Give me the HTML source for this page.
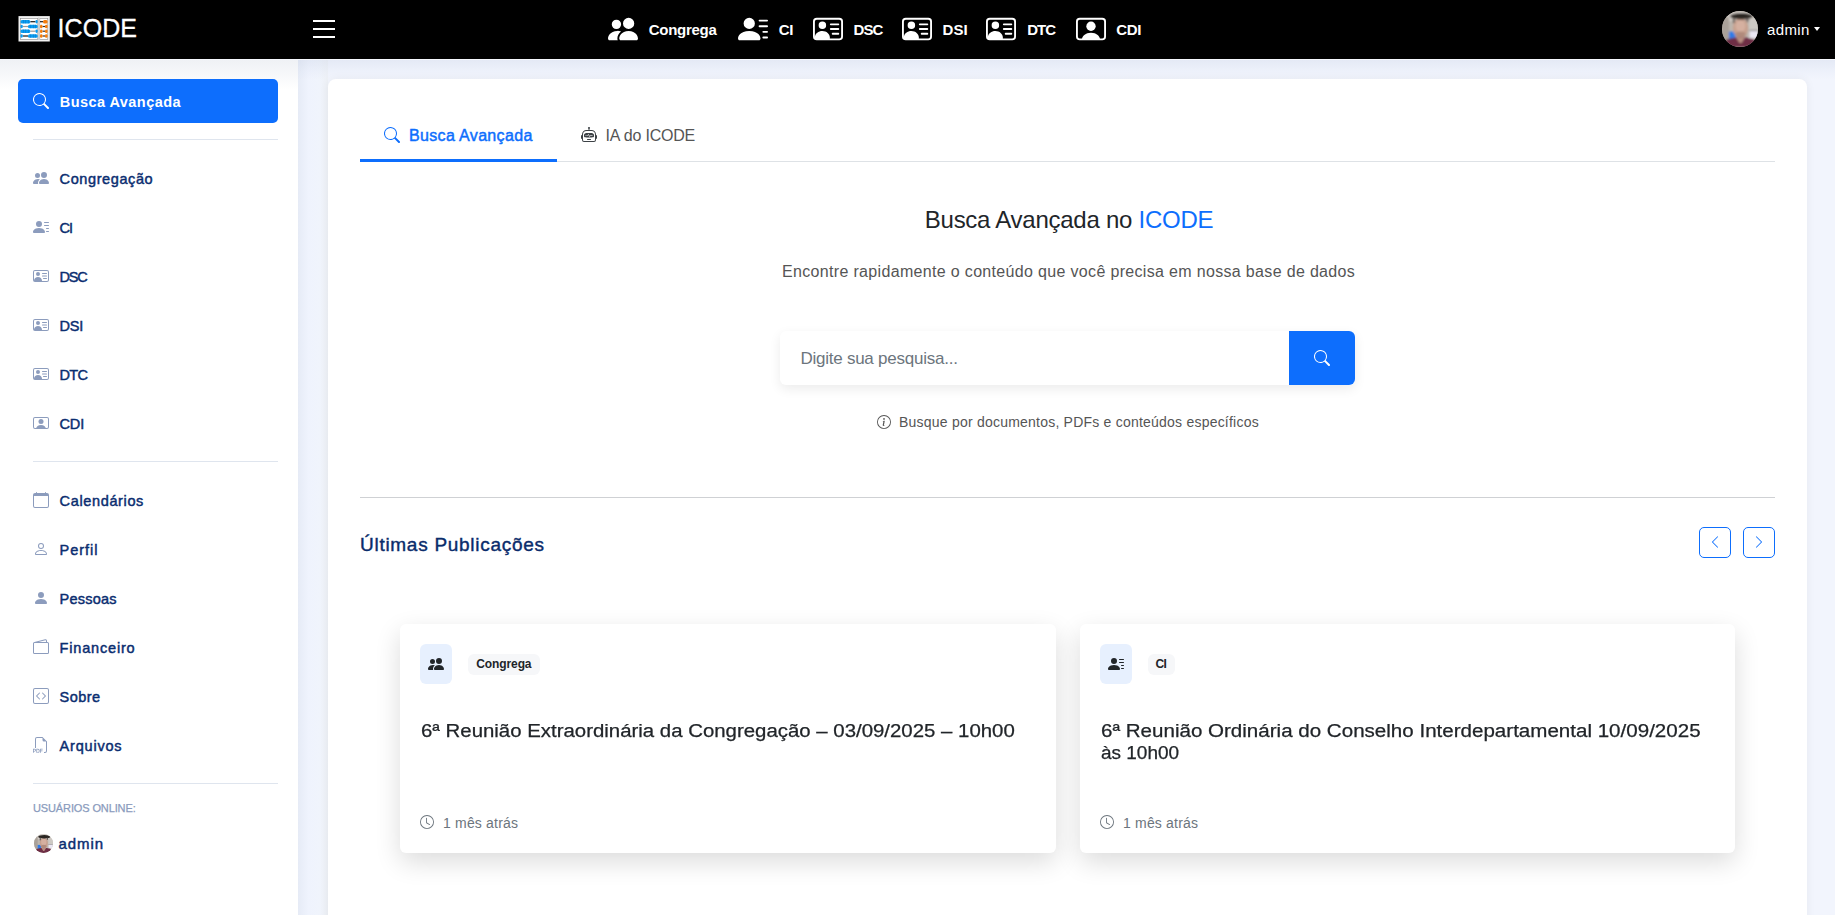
<!DOCTYPE html>
<html><head><meta charset="utf-8">
<style>
*{box-sizing:border-box;margin:0;padding:0}
html,body{width:1835px;height:915px;overflow:hidden}
body{font-family:"Liberation Sans",sans-serif;background:#f2f5fd;position:relative;color:#212529}
.abs{position:absolute}
svg{display:block}
#hdr{position:absolute;left:0;top:0;width:1835px;height:59px;background:#000;z-index:5}
#hline{position:absolute;left:0;top:59px;width:1835px;height:1px;background:#f6f8fe;z-index:5}
#side{position:absolute;left:0;top:60px;width:298px;height:855px;background:#fff}
#sidegrad{position:absolute;left:0;top:0;width:298px;height:30px;background:linear-gradient(#eff1f5,#fff)}
#bgshade{position:absolute;left:298px;top:60px;width:30px;height:855px;background:linear-gradient(90deg,#e6ebf6,#eff3fd 35%,#f0f4fc 70%,#eef1f6)}
#topshade{position:absolute;left:298px;top:60px;width:1537px;height:20px;background:linear-gradient(rgba(190,200,222,.26),rgba(200,210,232,.1) 60%,rgba(210,220,240,0))}
#card{position:absolute;left:328px;top:79px;width:1479px;height:900px;background:#fff;border-radius:8px;box-shadow:0 0 10px rgba(0,0,0,.06)}
.divl{position:absolute;left:33px;width:245px;height:1px;background:#dfe5ee}
.t{position:absolute;white-space:nowrap;line-height:1}
.avatar{border-radius:50%;background:radial-gradient(ellipse 30% 28% at 50% 48%,#c9a08a 0%,#b88a74 60%,transparent 100%),linear-gradient(180deg,#2a2420 0%,#3a302a 25%,#8d8680 45%,#7b6d66 65%,#6e2f3f 80%,#6a2a3a 100%)}
</style></head><body>
<div id="hdr">
<svg class="abs" style="left:16px;top:14px" width="36" height="30" viewBox="0 0 36 30">
<rect x="2.5" y="2.1" width="31.3" height="25.4" fill="#f2f2f2"/>
<rect x="4.3" y="4.3" width="17.5" height="21.1" fill="#fff" stroke="#8a8a8a" stroke-width="0.6"/>
<rect x="23.8" y="4.3" width="8" height="21.1" fill="#fff" stroke="#8a8a8a" stroke-width="0.6"/>
<rect x="21.9" y="3.5" width="1.8" height="22.5" fill="#d0d0d0"/>
<rect x="14.3" y="7.1000000000000005" width="5.2" height="1.2" fill="#1a1a1a"/>
<rect x="4.5" y="6.0" width="9.8" height="3.4" rx="1.5" fill="#0a9cf0"/>
<rect x="19.5" y="6.0" width="2.2" height="3.4" rx="1.1" fill="#0a9cf0"/>
<rect x="7.0" y="6.0" width="0.4" height="3.4" fill="#0670c0"/>
<rect x="9.5" y="6.0" width="0.4" height="3.4" fill="#0670c0"/>
<rect x="12.0" y="6.0" width="0.4" height="3.4" fill="#0670c0"/>
<rect x="24" y="7.1000000000000005" width="3" height="1.2" fill="#1a1a1a"/>
<rect x="27" y="6.0" width="4.6" height="3.4" rx="1.5" fill="#f57c0a"/>
<rect x="6.8" y="11.9" width="5.2" height="1.2" fill="#9a9a9a"/>
<rect x="4.5" y="10.8" width="2.3" height="3.4" rx="1.1" fill="#0a9cf0"/>
<rect x="12" y="10.8" width="9.7" height="3.4" rx="1.5" fill="#0a9cf0"/>
<rect x="14.5" y="10.8" width="0.4" height="3.4" fill="#0670c0"/>
<rect x="17.0" y="10.8" width="0.4" height="3.4" fill="#0670c0"/>
<rect x="19.4" y="10.8" width="0.4" height="3.4" fill="#0670c0"/>
<rect x="26.5" y="11.9" width="2.5" height="1.2" fill="#333"/>
<rect x="24" y="10.8" width="2.5" height="3.4" rx="1.2" fill="#f57c0a"/>
<rect x="29" y="10.8" width="2.6" height="3.4" rx="1.2" fill="#f57c0a"/>
<rect x="14.3" y="16.599999999999998" width="5.2" height="1.2" fill="#9a9a9a"/>
<rect x="4.5" y="15.5" width="9.8" height="3.4" rx="1.5" fill="#0a9cf0"/>
<rect x="19.5" y="15.5" width="2.2" height="3.4" rx="1.1" fill="#0a9cf0"/>
<rect x="7.0" y="15.5" width="0.4" height="3.4" fill="#0670c0"/>
<rect x="9.5" y="15.5" width="0.4" height="3.4" fill="#0670c0"/>
<rect x="12.0" y="15.5" width="0.4" height="3.4" fill="#0670c0"/>
<rect x="26.5" y="16.599999999999998" width="2.5" height="1.2" fill="#333"/>
<rect x="24" y="15.5" width="2.5" height="3.4" rx="1.2" fill="#f57c0a"/>
<rect x="29" y="15.5" width="2.6" height="3.4" rx="1.2" fill="#f57c0a"/>
<rect x="6.8" y="21.4" width="5.2" height="1.2" fill="#1a1a1a"/>
<rect x="4.5" y="20.3" width="2.3" height="3.4" rx="1.1" fill="#0a9cf0"/>
<rect x="12" y="20.3" width="9.7" height="3.4" rx="1.5" fill="#0a9cf0"/>
<rect x="14.5" y="20.3" width="0.4" height="3.4" fill="#0670c0"/>
<rect x="17.0" y="20.3" width="0.4" height="3.4" fill="#0670c0"/>
<rect x="19.4" y="20.3" width="0.4" height="3.4" fill="#0670c0"/>
<rect x="26.5" y="21.4" width="2.5" height="1.2" fill="#333"/>
<rect x="24" y="20.3" width="2.5" height="3.4" rx="1.2" fill="#f57c0a"/>
<rect x="29" y="20.3" width="2.6" height="3.4" rx="1.2" fill="#f57c0a"/>
</svg>
<div class="t" style="left:57.5px;top:15.64px;font-size:25px;color:#fff;font-weight:400;letter-spacing:0.07px;-webkit-text-stroke:0.3px #fff">ICODE</div>
<div class="abs" style="left:313px;top:20px;width:22px;height:2px;background:#fff"></div>
<div class="abs" style="left:313px;top:28px;width:22px;height:2px;background:#fff"></div>
<div class="abs" style="left:313px;top:36px;width:22px;height:2px;background:#fff"></div>
<svg class="abs" style="left:608px;top:14px;" width="30" height="30" viewBox="0 0 16 16" fill="#fff"><path d="M7 14s-1 0-1-1 1-4 5-4 5 3 5 4-1 1-1 1zm4-6a3 3 0 1 0 0-6 3 3 0 0 0 0 6m-5.784 6A2.24 2.24 0 0 1 5 13c0-1.355.68-2.75 1.936-3.72A6.3 6.3 0 0 0 5 9c-4 0-5 3-5 4s1 1 1 1zM4.5 8a2.5 2.5 0 1 0 0-5 2.5 2.5 0 0 0 0 5"/></svg>
<div class="t" style="left:648.8px;top:22.3px;font-size:15px;color:#fff;font-weight:700;letter-spacing:-0.29px;">Congrega</div>
<svg class="abs" style="left:738px;top:14px;" width="30" height="30" viewBox="0 0 16 16" fill="#fff"><path d="M6 8a3 3 0 1 0 0-6 3 3 0 0 0 0 6m-5 6s-1 0-1-1 1-4 6-4 6 3 6 4-1 1-1 1zM11 3.5a.5.5 0 0 1 .5-.5h4a.5.5 0 0 1 0 1h-4a.5.5 0 0 1-.5-.5m.5 2.5a.5.5 0 0 0 0 1h4a.5.5 0 0 0 0-1zm2 3a.5.5 0 0 0 0 1h2a.5.5 0 0 0 0-1zm0 3a.5.5 0 0 0 0 1h2a.5.5 0 0 0 0-1z"/></svg>
<div class="t" style="left:778.8px;top:22.3px;font-size:15px;color:#fff;font-weight:700;letter-spacing:-0.5px;">CI</div>
<svg class="abs" style="left:813px;top:14px;" width="30" height="30" viewBox="0 0 16 16" fill="#fff"><path d="M5 8a2 2 0 1 0 0-4 2 2 0 0 0 0 4m4-2.5a.5.5 0 0 1 .5-.5h4a.5.5 0 0 1 0 1h-4a.5.5 0 0 1-.5-.5M9 8a.5.5 0 0 1 .5-.5h4a.5.5 0 0 1 0 1h-4A.5.5 0 0 1 9 8m1 2.5a.5.5 0 0 1 .5-.5h3a.5.5 0 0 1 0 1h-3a.5.5 0 0 1-.5-.5"/><path d="M2 2a2 2 0 0 0-2 2v8a2 2 0 0 0 2 2h12a2 2 0 0 0 2-2V4a2 2 0 0 0-2-2zM1 4a1 1 0 0 1 1-1h12a1 1 0 0 1 1 1v8a1 1 0 0 1-1 1H8.96q.04-.245.04-.5C9 10.567 7.21 9 5 9c-2.086 0-3.8 1.398-3.984 3.181A1 1 0 0 1 1 12z"/></svg>
<div class="t" style="left:853.6px;top:22.3px;font-size:15px;color:#fff;font-weight:700;letter-spacing:-1px;">DSC</div>
<svg class="abs" style="left:902px;top:14px;" width="30" height="30" viewBox="0 0 16 16" fill="#fff"><path d="M5 8a2 2 0 1 0 0-4 2 2 0 0 0 0 4m4-2.5a.5.5 0 0 1 .5-.5h4a.5.5 0 0 1 0 1h-4a.5.5 0 0 1-.5-.5M9 8a.5.5 0 0 1 .5-.5h4a.5.5 0 0 1 0 1h-4A.5.5 0 0 1 9 8m1 2.5a.5.5 0 0 1 .5-.5h3a.5.5 0 0 1 0 1h-3a.5.5 0 0 1-.5-.5"/><path d="M2 2a2 2 0 0 0-2 2v8a2 2 0 0 0 2 2h12a2 2 0 0 0 2-2V4a2 2 0 0 0-2-2zM1 4a1 1 0 0 1 1-1h12a1 1 0 0 1 1 1v8a1 1 0 0 1-1 1H8.96q.04-.245.04-.5C9 10.567 7.21 9 5 9c-2.086 0-3.8 1.398-3.984 3.181A1 1 0 0 1 1 12z"/></svg>
<div class="t" style="left:942.6px;top:22.3px;font-size:15px;color:#fff;font-weight:700;letter-spacing:0.05px;">DSI</div>
<svg class="abs" style="left:986px;top:14px;" width="30" height="30" viewBox="0 0 16 16" fill="#fff"><path d="M5 8a2 2 0 1 0 0-4 2 2 0 0 0 0 4m4-2.5a.5.5 0 0 1 .5-.5h4a.5.5 0 0 1 0 1h-4a.5.5 0 0 1-.5-.5M9 8a.5.5 0 0 1 .5-.5h4a.5.5 0 0 1 0 1h-4A.5.5 0 0 1 9 8m1 2.5a.5.5 0 0 1 .5-.5h3a.5.5 0 0 1 0 1h-3a.5.5 0 0 1-.5-.5"/><path d="M2 2a2 2 0 0 0-2 2v8a2 2 0 0 0 2 2h12a2 2 0 0 0 2-2V4a2 2 0 0 0-2-2zM1 4a1 1 0 0 1 1-1h12a1 1 0 0 1 1 1v8a1 1 0 0 1-1 1H8.96q.04-.245.04-.5C9 10.567 7.21 9 5 9c-2.086 0-3.8 1.398-3.984 3.181A1 1 0 0 1 1 12z"/></svg>
<div class="t" style="left:1027.2px;top:22.3px;font-size:15px;color:#fff;font-weight:700;letter-spacing:-1px;">DTC</div>
<svg class="abs" style="left:1076px;top:14px;" width="30" height="30" viewBox="0 0 16 16" fill="#fff"><path d="M8 9.05a2.5 2.5 0 1 0 0-5 2.5 2.5 0 0 0 0 5"/><path d="M2 2a2 2 0 0 0-2 2v8a2 2 0 0 0 2 2h12a2 2 0 0 0 2-2V4a2 2 0 0 0-2-2zm10.798 11c-.453-1.27-1.76-3-4.798-3-3.037 0-4.345 1.73-4.798 3H2a1 1 0 0 1-1-1V4a1 1 0 0 1 1-1h12a1 1 0 0 1 1 1v8a1 1 0 0 1-1 1z"/></svg>
<div class="t" style="left:1116.2px;top:22.3px;font-size:15px;color:#fff;font-weight:700;letter-spacing:-0.3px;">CDI</div>
<svg class="abs" style="left:1722px;top:11px" width="36" height="36" viewBox="0 0 36 36">
<defs><clipPath id="cp1722"><circle cx="18" cy="18" r="18"/></clipPath><filter id="bl1722" x="-20%" y="-20%" width="140%" height="140%"><feGaussianBlur stdDeviation="1.05"/></filter></defs>
<g clip-path="url(#cp1722)"><rect width="36" height="36" fill="#bdb6ae"/>
<g filter="url(#bl1722)">
<rect x="0" y="0" width="36" height="10" fill="#d3cec8"/>
<rect x="0" y="6" width="7" height="30" fill="#a9a199"/>
<rect x="27" y="8" width="10" height="12" fill="#cdc9c4"/>
<rect x="7" y="20.6" width="6.5" height="7.5" fill="#2f7be8"/>
<rect x="27.5" y="19.3" width="9" height="0.9" fill="#3a3a3a"/>
<rect x="27.5" y="20" width="9" height="7.2" fill="#ebe7f4"/>
<ellipse cx="18.5" cy="17" rx="7.6" ry="10" fill="#c7a08e"/>
<ellipse cx="18.5" cy="15" rx="5" ry="6" fill="#d5b0a0"/>
<ellipse cx="18.5" cy="23.5" rx="5.5" ry="3" fill="#b08a7c"/>
<ellipse cx="19.5" cy="5.2" rx="11.5" ry="3.2" fill="#2a2523"/>
<rect x="10.8" y="6" width="2.2" height="6" fill="#4a403b" opacity=".8"/>
<rect x="24.3" y="6" width="2.2" height="5" fill="#4a403b" opacity=".8"/>
<path d="M0 36 L0 31 Q6 27.5 13 26.6 L24 26.6 Q31 27.5 36 31 L36 36 Z" fill="#6e2e45"/>
<path d="M14 26.6 L23 26.6 L19.5 32 L17.5 32 Z" fill="#b98f82"/>
</g></g></svg>
<div class="t" style="left:1767px;top:21.9px;font-size:15px;color:#fff;font-weight:400;letter-spacing:0.37px;">admin</div>
<div class="abs" style="left:1813.5px;top:27px;width:0;height:0;border-left:3.5px solid transparent;border-right:3.5px solid transparent;border-top:4px solid #fff"></div>
</div><div id="hline"></div>
<div id="side"><div id="sidegrad"></div></div>
<div class="abs" style="left:18px;top:79px;width:260px;height:44px;background:#0d6efd;border-radius:5px"></div>
<svg class="abs" style="left:33px;top:93px;" width="16" height="16" viewBox="0 0 16 16" fill="#fff"><path d="M11.742 10.344a6.5 6.5 0 1 0-1.397 1.398h-.001q.044.06.098.115l3.85 3.85a1 1 0 0 0 1.415-1.414l-3.85-3.85a1 1 0 0 0-.115-.1zM12 6.5a5.5 5.5 0 1 1-11 0 5.5 5.5 0 0 1 11 0"/></svg>
<div class="t" style="left:59.8px;top:94.73px;font-size:14.5px;color:#fff;font-weight:700;letter-spacing:0.44px;">Busca Avançada</div>
<div class="divl" style="top:139px"></div>
<svg class="abs" style="left:33px;top:170px;" width="16" height="16" viewBox="0 0 16 16" fill="#8c9cbd"><path d="M7 14s-1 0-1-1 1-4 5-4 5 3 5 4-1 1-1 1zm4-6a3 3 0 1 0 0-6 3 3 0 0 0 0 6m-5.784 6A2.24 2.24 0 0 1 5 13c0-1.355.68-2.75 1.936-3.72A6.3 6.3 0 0 0 5 9c-4 0-5 3-5 4s1 1 1 1zM4.5 8a2.5 2.5 0 1 0 0-5 2.5 2.5 0 0 0 0 5"/></svg>
<div class="t" style="left:59.6px;top:171.53px;font-size:14.5px;color:#0a2d70;font-weight:400;letter-spacing:0.6px;-webkit-text-stroke:0.45px #0a2d70">Congregação</div>
<svg class="abs" style="left:33px;top:219px;" width="16" height="16" viewBox="0 0 16 16" fill="#8c9cbd"><path d="M6 8a3 3 0 1 0 0-6 3 3 0 0 0 0 6m-5 6s-1 0-1-1 1-4 6-4 6 3 6 4-1 1-1 1zM11 3.5a.5.5 0 0 1 .5-.5h4a.5.5 0 0 1 0 1h-4a.5.5 0 0 1-.5-.5m.5 2.5a.5.5 0 0 0 0 1h4a.5.5 0 0 0 0-1zm2 3a.5.5 0 0 0 0 1h2a.5.5 0 0 0 0-1zm0 3a.5.5 0 0 0 0 1h2a.5.5 0 0 0 0-1z"/></svg>
<div class="t" style="left:59.6px;top:220.53px;font-size:14.5px;color:#0a2d70;font-weight:400;letter-spacing:-1.0px;-webkit-text-stroke:0.45px #0a2d70">CI</div>
<svg class="abs" style="left:33px;top:268px;" width="16" height="16" viewBox="0 0 16 16" fill="#8c9cbd"><path d="M5 8a2 2 0 1 0 0-4 2 2 0 0 0 0 4m4-2.5a.5.5 0 0 1 .5-.5h4a.5.5 0 0 1 0 1h-4a.5.5 0 0 1-.5-.5M9 8a.5.5 0 0 1 .5-.5h4a.5.5 0 0 1 0 1h-4A.5.5 0 0 1 9 8m1 2.5a.5.5 0 0 1 .5-.5h3a.5.5 0 0 1 0 1h-3a.5.5 0 0 1-.5-.5"/><path d="M2 2a2 2 0 0 0-2 2v8a2 2 0 0 0 2 2h12a2 2 0 0 0 2-2V4a2 2 0 0 0-2-2zM1 4a1 1 0 0 1 1-1h12a1 1 0 0 1 1 1v8a1 1 0 0 1-1 1H8.96q.04-.245.04-.5C9 10.567 7.21 9 5 9c-2.086 0-3.8 1.398-3.984 3.181A1 1 0 0 1 1 12z"/></svg>
<div class="t" style="left:59.6px;top:269.53px;font-size:14.5px;color:#0a2d70;font-weight:400;letter-spacing:-1.2px;-webkit-text-stroke:0.45px #0a2d70">DSC</div>
<svg class="abs" style="left:33px;top:317px;" width="16" height="16" viewBox="0 0 16 16" fill="#8c9cbd"><path d="M5 8a2 2 0 1 0 0-4 2 2 0 0 0 0 4m4-2.5a.5.5 0 0 1 .5-.5h4a.5.5 0 0 1 0 1h-4a.5.5 0 0 1-.5-.5M9 8a.5.5 0 0 1 .5-.5h4a.5.5 0 0 1 0 1h-4A.5.5 0 0 1 9 8m1 2.5a.5.5 0 0 1 .5-.5h3a.5.5 0 0 1 0 1h-3a.5.5 0 0 1-.5-.5"/><path d="M2 2a2 2 0 0 0-2 2v8a2 2 0 0 0 2 2h12a2 2 0 0 0 2-2V4a2 2 0 0 0-2-2zM1 4a1 1 0 0 1 1-1h12a1 1 0 0 1 1 1v8a1 1 0 0 1-1 1H8.96q.04-.245.04-.5C9 10.567 7.21 9 5 9c-2.086 0-3.8 1.398-3.984 3.181A1 1 0 0 1 1 12z"/></svg>
<div class="t" style="left:59.6px;top:318.53px;font-size:14.5px;color:#0a2d70;font-weight:400;letter-spacing:-0.2px;-webkit-text-stroke:0.45px #0a2d70">DSI</div>
<svg class="abs" style="left:33px;top:366px;" width="16" height="16" viewBox="0 0 16 16" fill="#8c9cbd"><path d="M5 8a2 2 0 1 0 0-4 2 2 0 0 0 0 4m4-2.5a.5.5 0 0 1 .5-.5h4a.5.5 0 0 1 0 1h-4a.5.5 0 0 1-.5-.5M9 8a.5.5 0 0 1 .5-.5h4a.5.5 0 0 1 0 1h-4A.5.5 0 0 1 9 8m1 2.5a.5.5 0 0 1 .5-.5h3a.5.5 0 0 1 0 1h-3a.5.5 0 0 1-.5-.5"/><path d="M2 2a2 2 0 0 0-2 2v8a2 2 0 0 0 2 2h12a2 2 0 0 0 2-2V4a2 2 0 0 0-2-2zM1 4a1 1 0 0 1 1-1h12a1 1 0 0 1 1 1v8a1 1 0 0 1-1 1H8.96q.04-.245.04-.5C9 10.567 7.21 9 5 9c-2.086 0-3.8 1.398-3.984 3.181A1 1 0 0 1 1 12z"/></svg>
<div class="t" style="left:59.6px;top:367.53px;font-size:14.5px;color:#0a2d70;font-weight:400;letter-spacing:-0.7px;-webkit-text-stroke:0.45px #0a2d70">DTC</div>
<svg class="abs" style="left:33px;top:415px;" width="16" height="16" viewBox="0 0 16 16" fill="#8c9cbd"><path d="M8 9.05a2.5 2.5 0 1 0 0-5 2.5 2.5 0 0 0 0 5"/><path d="M2 2a2 2 0 0 0-2 2v8a2 2 0 0 0 2 2h12a2 2 0 0 0 2-2V4a2 2 0 0 0-2-2zm10.798 11c-.453-1.27-1.76-3-4.798-3-3.037 0-4.345 1.73-4.798 3H2a1 1 0 0 1-1-1V4a1 1 0 0 1 1-1h12a1 1 0 0 1 1 1v8a1 1 0 0 1-1 1z"/></svg>
<div class="t" style="left:59.6px;top:416.53px;font-size:14.5px;color:#0a2d70;font-weight:400;letter-spacing:-0.2px;-webkit-text-stroke:0.45px #0a2d70">CDI</div>
<div class="divl" style="top:461px"></div>
<svg class="abs" style="left:33px;top:492px;" width="16" height="16" viewBox="0 0 16 16" fill="#8c9cbd"><path d="M3.5 0a.5.5 0 0 1 .5.5V1h8V.5a.5.5 0 0 1 1 0V1h1a2 2 0 0 1 2 2v11a2 2 0 0 1-2 2H2a2 2 0 0 1-2-2V3a2 2 0 0 1 2-2h1V.5a.5.5 0 0 1 .5-.5M1 4v10a1 1 0 0 0 1 1h12a1 1 0 0 0 1-1V4z"/></svg>
<div class="t" style="left:59.6px;top:493.73px;font-size:14.5px;color:#0a2d70;font-weight:400;letter-spacing:0.64px;-webkit-text-stroke:0.45px #0a2d70">Calendários</div>
<svg class="abs" style="left:33px;top:541px;" width="16" height="16" viewBox="0 0 16 16" fill="#8c9cbd"><path d="M8 8a3 3 0 1 0 0-6 3 3 0 0 0 0 6m2-3a2 2 0 1 1-4 0 2 2 0 0 1 4 0m4 8c0 1-1 1-1 1H3s-1 0-1-1 1-4 6-4 6 3 6 4m-1-.004c-.001-.246-.154-.986-.832-1.664C11.516 10.68 10.289 10 8 10s-3.516.68-4.168 1.332c-.678.678-.83 1.418-.832 1.664z"/></svg>
<div class="t" style="left:59.6px;top:542.73px;font-size:14.5px;color:#0a2d70;font-weight:400;letter-spacing:0.98px;-webkit-text-stroke:0.45px #0a2d70">Perfil</div>
<svg class="abs" style="left:33px;top:590px;" width="16" height="16" viewBox="0 0 16 16" fill="#8c9cbd"><path d="M3 14s-1 0-1-1 1-4 6-4 6 3 6 4-1 1-1 1zm5-6a3 3 0 1 0 0-6 3 3 0 0 0 0 6"/></svg>
<div class="t" style="left:59.6px;top:591.73px;font-size:14.5px;color:#0a2d70;font-weight:400;letter-spacing:0.23px;-webkit-text-stroke:0.45px #0a2d70">Pessoas</div>
<svg class="abs" style="left:33px;top:639px;" width="16" height="16" viewBox="0 0 16 16" fill="#8c9cbd"><path d="M12.136.326A1.5 1.5 0 0 1 14 1.78V3h.5A1.5 1.5 0 0 1 16 4.5v9a1.5 1.5 0 0 1-1.5 1.5h-13A1.5 1.5 0 0 1 0 13.5v-9a1.5 1.5 0 0 1 1.432-1.499zM5.562 3H13V1.78a.5.5 0 0 0-.621-.484zM1.5 4a.5.5 0 0 0-.5.5v9a.5.5 0 0 0 .5.5h13a.5.5 0 0 0 .5-.5v-9a.5.5 0 0 0-.5-.5z"/></svg>
<div class="t" style="left:59.6px;top:640.73px;font-size:14.5px;color:#0a2d70;font-weight:400;letter-spacing:0.82px;-webkit-text-stroke:0.45px #0a2d70">Financeiro</div>
<svg class="abs" style="left:33px;top:688px;" width="16" height="16" viewBox="0 0 16 16" fill="#8c9cbd"><path d="M14 1a1 1 0 0 1 1 1v12a1 1 0 0 1-1 1H2a1 1 0 0 1-1-1V2a1 1 0 0 1 1-1zM2 0a2 2 0 0 0-2 2v12a2 2 0 0 0 2 2h12a2 2 0 0 0 2-2V2a2 2 0 0 0-2-2z"/><path d="M6.854 4.646a.5.5 0 0 1 0 .708L4.207 8l2.647 2.646a.5.5 0 0 1-.708.708l-3-3a.5.5 0 0 1 0-.708l3-3a.5.5 0 0 1 .708 0m2.292 0a.5.5 0 0 0 0 .708L11.793 8l-2.647 2.646a.5.5 0 0 0 .708.708l3-3a.5.5 0 0 0 0-.708l-3-3a.5.5 0 0 0-.708 0"/></svg>
<div class="t" style="left:59.6px;top:689.73px;font-size:14.5px;color:#0a2d70;font-weight:400;letter-spacing:0.45px;-webkit-text-stroke:0.45px #0a2d70">Sobre</div>
<svg class="abs" style="left:33px;top:737px;" width="16" height="16" viewBox="0 0 16 16" fill="#8c9cbd"><path fill-rule="evenodd" d="M14 4.5V14a2 2 0 0 1-2 2h-1v-1h1a1 1 0 0 0 1-1V4.5h-2A1.5 1.5 0 0 1 9.5 3V1H4a1 1 0 0 0-1 1v9H2V2a2 2 0 0 1 2-2h5.5zM1.6 11.85H0v3.999h.791v-1.342h.803q.43 0 .732-.173.305-.175.463-.474a1.4 1.4 0 0 0 .161-.677q0-.375-.158-.677a1.2 1.2 0 0 0-.46-.477q-.3-.18-.732-.179m.545 1.333a.8.8 0 0 1-.085.38.57.57 0 0 1-.238.241.8.8 0 0 1-.375.082H.788V12.48h.66q.327 0 .512.181.185.183.185.522m1.217-1.333v3.999h1.46q.602 0 .998-.237a1.45 1.45 0 0 0 .595-.689q.196-.45.196-1.084 0-.63-.196-1.075a1.43 1.43 0 0 0-.589-.68q-.396-.234-1.005-.234zm.791.645h.563q.371 0 .609.152a.9.9 0 0 1 .354.454q.118.302.118.753a2.3 2.3 0 0 1-.068.592 1.1 1.1 0 0 1-.196.422.8.8 0 0 1-.334.252 1.3 1.3 0 0 1-.483.082h-.563zm3.743 1.763v1.591h-.79V11.85h2.548v.653H7.896v1.117h1.606v.638z"/></svg>
<div class="t" style="left:59.6px;top:738.73px;font-size:14.5px;color:#0a2d70;font-weight:400;letter-spacing:0.79px;-webkit-text-stroke:0.45px #0a2d70">Arquivos</div>
<div class="divl" style="top:783px"></div>
<div class="t" style="left:33px;top:803.09px;font-size:11px;color:#8a9bbd;font-weight:400;letter-spacing:-0.12px;-webkit-text-stroke:0.25px #8a9bbd">USUÁRIOS ONLINE:</div>
<svg class="abs" style="left:33.5px;top:833.5px" width="19" height="19" viewBox="0 0 36 36">
<defs><clipPath id="cp33_5"><circle cx="18" cy="18" r="18"/></clipPath><filter id="bl33_5" x="-20%" y="-20%" width="140%" height="140%"><feGaussianBlur stdDeviation="1.05"/></filter></defs>
<g clip-path="url(#cp33_5)"><rect width="36" height="36" fill="#bdb6ae"/>
<g filter="url(#bl33_5)">
<rect x="0" y="0" width="36" height="10" fill="#d3cec8"/>
<rect x="0" y="6" width="7" height="30" fill="#a9a199"/>
<rect x="27" y="8" width="10" height="12" fill="#cdc9c4"/>
<rect x="7" y="20.6" width="6.5" height="7.5" fill="#2f7be8"/>
<rect x="27.5" y="19.3" width="9" height="0.9" fill="#3a3a3a"/>
<rect x="27.5" y="20" width="9" height="7.2" fill="#ebe7f4"/>
<ellipse cx="18.5" cy="17" rx="7.6" ry="10" fill="#c7a08e"/>
<ellipse cx="18.5" cy="15" rx="5" ry="6" fill="#d5b0a0"/>
<ellipse cx="18.5" cy="23.5" rx="5.5" ry="3" fill="#b08a7c"/>
<ellipse cx="19.5" cy="5.2" rx="11.5" ry="3.2" fill="#2a2523"/>
<rect x="10.8" y="6" width="2.2" height="6" fill="#4a403b" opacity=".8"/>
<rect x="24.3" y="6" width="2.2" height="5" fill="#4a403b" opacity=".8"/>
<path d="M0 36 L0 31 Q6 27.5 13 26.6 L24 26.6 Q31 27.5 36 31 L36 36 Z" fill="#6e2e45"/>
<path d="M14 26.6 L23 26.6 L19.5 32 L17.5 32 Z" fill="#b98f82"/>
</g></g></svg>
<div class="t" style="left:58.5px;top:836.0px;font-size:15px;color:#0a2d70;font-weight:400;letter-spacing:0.95px;-webkit-text-stroke:0.45px #0a2d70">admin</div>
<div id="bgshade"></div><div id="topshade"></div>
<div id="card"></div>
<svg class="abs" style="left:384px;top:127px;" width="16" height="16" viewBox="0 0 16 16" fill="#0d6efd"><path d="M11.742 10.344a6.5 6.5 0 1 0-1.397 1.398h-.001q.044.06.098.115l3.85 3.85a1 1 0 0 0 1.415-1.414l-3.85-3.85a1 1 0 0 0-.115-.1zM12 6.5a5.5 5.5 0 1 1-11 0 5.5 5.5 0 0 1 11 0"/></svg>
<div class="t" style="left:409px;top:128.21px;font-size:16px;color:#0d6efd;font-weight:400;letter-spacing:0.34px;-webkit-text-stroke:0.45px #0d6efd">Busca Avançada</div>
<svg class="abs" style="left:581px;top:127px;" width="16" height="16" viewBox="0 0 16 16" fill="#3d4246"><path d="M6 12.5a.5.5 0 0 1 .5-.5h3a.5.5 0 0 1 0 1h-3a.5.5 0 0 1-.5-.5M3 8.062C3 6.76 4.235 5.765 5.53 5.886a26.6 26.6 0 0 0 4.94 0C11.765 5.765 13 6.76 13 8.062v1.157a.93.93 0 0 1-.765.935c-.845.147-2.34.346-4.235.346s-3.39-.2-4.235-.346A.93.93 0 0 1 3 9.219zm4.542-.827a.25.25 0 0 0-.217.068l-.92.9a25 25 0 0 1-1.871-.183.25.25 0 0 0-.068.495c.55.076 1.232.149 2.02.193a.25.25 0 0 0 .189-.071l.754-.736.847 1.71a.25.25 0 0 0 .404.062l.932-.97a25 25 0 0 0 1.922-.188.25.25 0 0 0-.068-.495c-.538.074-1.207.145-1.98.189a.25.25 0 0 0-.166.076l-.754.785-.842-1.7a.25.25 0 0 0-.182-.135"/><path d="M8.5 1.866a1 1 0 1 0-1 0V3h-2A4.5 4.5 0 0 0 1 7.5V8a1 1 0 0 0-1 1v2a1 1 0 0 0 1 1v1a2 2 0 0 0 2 2h10a2 2 0 0 0 2-2v-1a1 1 0 0 0 1-1V9a1 1 0 0 0-1-1v-.5A4.5 4.5 0 0 0 10.5 3h-2zM14 7.5V13a1 1 0 0 1-1 1H3a1 1 0 0 1-1-1V7.5A3.5 3.5 0 0 1 5.5 4h5A3.5 3.5 0 0 1 14 7.5"/></svg>
<div class="t" style="left:605.6px;top:128.21px;font-size:16px;color:#555;font-weight:400;letter-spacing:-0.19px;">IA do ICODE</div>
<div class="abs" style="left:360px;top:161px;width:1415px;height:1px;background:#dee2e6"></div>
<div class="abs" style="left:360px;top:159px;width:197px;height:3px;background:#0d6efd"></div>
<div class="t" style="left:924.8px;top:208.48px;font-size:24px;color:#212529;font-weight:400;letter-spacing:-0.26px;">Busca Avançada no <span style="color:#0d6efd">ICODE</span></div>
<div class="t" style="left:782px;top:264.06px;font-size:16px;color:#555;font-weight:400;letter-spacing:0.33px;">Encontre rapidamente o conteúdo que você precisa em nossa base de dados</div>
<div class="abs" style="left:780px;top:331px;width:575px;height:54px;border-radius:6px;background:#fff;box-shadow:0 4px 12px rgba(0,0,0,.08)"></div>
<div class="abs" style="left:1289px;top:331px;width:66px;height:54px;border-radius:0 6px 6px 0;background:#0d6efd"></div>
<svg class="abs" style="left:1314px;top:350px;" width="16" height="16" viewBox="0 0 16 16" fill="#fff"><path d="M11.742 10.344a6.5 6.5 0 1 0-1.397 1.398h-.001q.044.06.098.115l3.85 3.85a1 1 0 0 0 1.415-1.414l-3.85-3.85a1 1 0 0 0-.115-.1zM12 6.5a5.5 5.5 0 1 1-11 0 5.5 5.5 0 0 1 11 0"/></svg>
<div class="t" style="left:800.4px;top:349.51px;font-size:17px;color:#6c757d;font-weight:400;letter-spacing:-0.24px;">Digite sua pesquisa...</div>
<svg class="abs" style="left:876.5px;top:415px;" width="14" height="14" viewBox="0 0 16 16" fill="#555"><path d="M8 15A7 7 0 1 1 8 1a7 7 0 0 1 0 14m0 1A8 8 0 1 0 8 0a8 8 0 0 0 0 16"/><path d="m8.93 6.588-2.29.287-.082.38.45.083c.294.07.352.176.288.469l-.738 3.468c-.194.897.105 1.319.808 1.319.545 0 1.178-.252 1.465-.598l.088-.416c-.2.176-.492.246-.686.246-.275 0-.375-.193-.304-.533zM9 4.5a1 1 0 1 1-2 0 1 1 0 0 1 2 0"/></svg>
<div class="t" style="left:899px;top:414.95px;font-size:14px;color:#555;font-weight:400;letter-spacing:0.22px;">Busque por documentos, PDFs e conteúdos específicos</div>
<div class="abs" style="left:360px;top:497px;width:1415px;height:1px;background:#cfd1d4"></div>
<div class="t" style="left:360px;top:535.32px;font-size:19px;color:#0a2c6b;font-weight:400;letter-spacing:0.72px;-webkit-text-stroke:0.4px #0a2c6b">Últimas Publicações</div>
<div class="abs" style="left:1699px;top:527px;width:32px;height:31px;border:1px solid #0d6efd;border-radius:5px"></div>
<div class="abs" style="left:1743px;top:527px;width:32px;height:31px;border:1px solid #0d6efd;border-radius:5px"></div>
<svg class="abs" style="left:1707.5px;top:535px;" width="14" height="14" viewBox="0 0 16 16" fill="#0d6efd"><path fill-rule="evenodd" d="M11.354 1.646a.5.5 0 0 1 0 .708L5.707 8l5.647 5.646a.5.5 0 0 1-.708.708l-6-6a.5.5 0 0 1 0-.708l6-6a.5.5 0 0 1 .708 0"/></svg>
<svg class="abs" style="left:1751.5px;top:535px;" width="14" height="14" viewBox="0 0 16 16" fill="#0d6efd"><path fill-rule="evenodd" d="M4.646 1.646a.5.5 0 0 1 .708 0l6 6a.5.5 0 0 1 0 .708l-6 6a.5.5 0 0 1-.708-.708L10.293 8 4.646 2.354a.5.5 0 0 1 0-.708"/></svg>
<div class="abs" style="left:400px;top:624px;width:656px;height:229px;border-radius:6px;background:#fff;box-shadow:0 9px 26px rgba(0,0,0,.14)"></div>
<div class="abs" style="left:420px;top:644px;width:32px;height:40px;border-radius:6px;background:#e7f0fe"></div>
<svg class="abs" style="left:428px;top:656px;" width="16" height="16" viewBox="0 0 16 16" fill="#212529"><path d="M7 14s-1 0-1-1 1-4 5-4 5 3 5 4-1 1-1 1zm4-6a3 3 0 1 0 0-6 3 3 0 0 0 0 6m-5.784 6A2.24 2.24 0 0 1 5 13c0-1.355.68-2.75 1.936-3.72A6.3 6.3 0 0 0 5 9c-4 0-5 3-5 4s1 1 1 1zM4.5 8a2.5 2.5 0 1 0 0-5 2.5 2.5 0 0 0 0 5"/></svg>
<div class="abs" style="left:468px;top:654px;width:72px;height:21px;border-radius:6px;background:#f6f7f9"></div>
<div class="t" style="left:476.3px;top:657.74px;font-size:12px;color:#212529;font-weight:700;letter-spacing:-0.11px;">Congrega</div>
<div class="t" style="left:420.7px;top:721.76px;font-size:18px;color:#212529;font-weight:400;letter-spacing:0px;transform:scaleX(1.133);transform-origin:0 0;-webkit-text-stroke:0.25px #212529">6ª Reunião Extraordinária da Congregação – 03/09/2025 – 10h00</div>
<svg class="abs" style="left:420px;top:815px;" width="14" height="14" viewBox="0 0 16 16" fill="#6c757d"><path d="M8 3.5a.5.5 0 0 0-1 0V9a.5.5 0 0 0 .252.434l3.5 2a.5.5 0 0 0 .496-.868L8 8.71z"/><path d="M8 16A8 8 0 1 0 8 0a8 8 0 0 0 0 16m7-8A7 7 0 1 1 1 8a7 7 0 0 1 14 0"/></svg>
<div class="t" style="left:443px;top:816.05px;font-size:14px;color:#6c757d;font-weight:400;letter-spacing:0.18px;">1 mês atrás</div>
<div class="abs" style="left:1080px;top:624px;width:655px;height:229px;border-radius:6px;background:#fff;box-shadow:0 9px 26px rgba(0,0,0,.14)"></div>
<div class="abs" style="left:1100px;top:644px;width:32px;height:40px;border-radius:6px;background:#e7f0fe"></div>
<svg class="abs" style="left:1108px;top:656px;" width="16" height="16" viewBox="0 0 16 16" fill="#212529"><path d="M6 8a3 3 0 1 0 0-6 3 3 0 0 0 0 6m-5 6s-1 0-1-1 1-4 6-4 6 3 6 4-1 1-1 1zM11 3.5a.5.5 0 0 1 .5-.5h4a.5.5 0 0 1 0 1h-4a.5.5 0 0 1-.5-.5m.5 2.5a.5.5 0 0 0 0 1h4a.5.5 0 0 0 0-1zm2 3a.5.5 0 0 0 0 1h2a.5.5 0 0 0 0-1zm0 3a.5.5 0 0 0 0 1h2a.5.5 0 0 0 0-1z"/></svg>
<div class="abs" style="left:1148px;top:654px;width:27px;height:21px;border-radius:6px;background:#f6f7f9"></div>
<div class="t" style="left:1155.4px;top:657.74px;font-size:12px;color:#212529;font-weight:700;letter-spacing:-0.6px;">CI</div>
<div class="t" style="left:1100.7px;top:721.76px;font-size:18px;color:#212529;font-weight:400;letter-spacing:0px;transform:scaleX(1.142);transform-origin:0 0;-webkit-text-stroke:0.25px #212529">6ª Reunião Ordinária do Conselho Interdepartamental 10/09/2025</div>
<div class="t" style="left:1100.7px;top:743.56px;font-size:18px;color:#212529;font-weight:400;letter-spacing:0px;transform:scaleX(1.054);transform-origin:0 0;-webkit-text-stroke:0.25px #212529">às 10h00</div>
<svg class="abs" style="left:1100px;top:815px;" width="14" height="14" viewBox="0 0 16 16" fill="#6c757d"><path d="M8 3.5a.5.5 0 0 0-1 0V9a.5.5 0 0 0 .252.434l3.5 2a.5.5 0 0 0 .496-.868L8 8.71z"/><path d="M8 16A8 8 0 1 0 8 0a8 8 0 0 0 0 16m7-8A7 7 0 1 1 1 8a7 7 0 0 1 14 0"/></svg>
<div class="t" style="left:1123px;top:816.05px;font-size:14px;color:#6c757d;font-weight:400;letter-spacing:0.18px;">1 mês atrás</div>
</body></html>
